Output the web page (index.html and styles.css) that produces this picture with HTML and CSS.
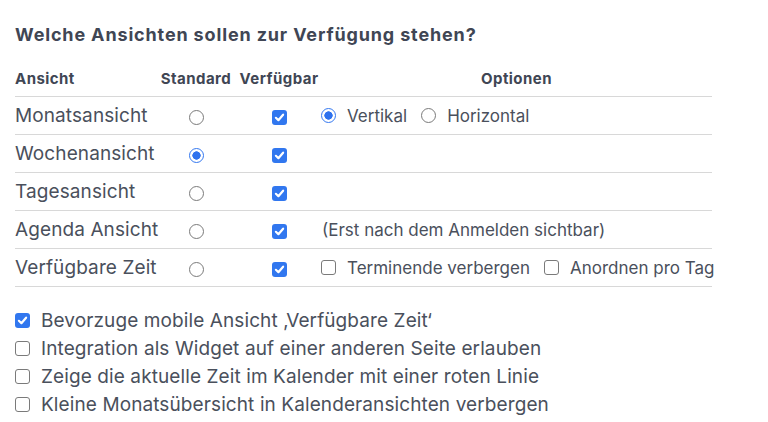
FILE: index.html
```html
<!DOCTYPE html>
<html lang="de">
<head>
<meta charset="utf-8">
<link rel="stylesheet" href="styles.css">
</head>
<body>
<div class="page">
  <h2 class="title">Welche Ansichten sollen zur Verfügung stehen?</h2>
  <table class="views">
    <thead>
      <tr>
        <th class="c-name">Ansicht</th>
        <th class="c-std">Standard</th>
        <th class="c-av">Verfügbar</th>
        <th class="c-opt">Optionen</th>
      </tr>
    </thead>
    <tbody>
      <tr>
        <td class="c-name">Monatsansicht</td>
        <td class="c-std"><span class="radio"></span></td>
        <td class="c-av"><span class="cb on"><svg viewBox="0 0 15 15"><path d="M3.9 7.8 L6.4 10.2 L11.1 4.7"/></svg></span></td>
        <td class="c-opt"><div class="opts"><label class="opt"><span class="radio on"></span>Vertikal</label><label class="opt"><span class="radio"></span>Horizontal</label></div></td>
      </tr>
      <tr>
        <td class="c-name">Wochenansicht</td>
        <td class="c-std"><span class="radio on"></span></td>
        <td class="c-av"><span class="cb on"><svg viewBox="0 0 15 15"><path d="M3.9 7.8 L6.4 10.2 L11.1 4.7"/></svg></span></td>
        <td class="c-opt"></td>
      </tr>
      <tr>
        <td class="c-name">Tagesansicht</td>
        <td class="c-std"><span class="radio"></span></td>
        <td class="c-av"><span class="cb on"><svg viewBox="0 0 15 15"><path d="M3.9 7.8 L6.4 10.2 L11.1 4.7"/></svg></span></td>
        <td class="c-opt"></td>
      </tr>
      <tr>
        <td class="c-name">Agenda Ansicht</td>
        <td class="c-std"><span class="radio"></span></td>
        <td class="c-av"><span class="cb on"><svg viewBox="0 0 15 15"><path d="M3.9 7.8 L6.4 10.2 L11.1 4.7"/></svg></span></td>
        <td class="c-opt"><span class="note">(Erst nach dem Anmelden sichtbar)</span></td>
      </tr>
      <tr>
        <td class="c-name">Verfügbare Zeit</td>
        <td class="c-std"><span class="radio"></span></td>
        <td class="c-av"><span class="cb on"><svg viewBox="0 0 15 15"><path d="M3.9 7.8 L6.4 10.2 L11.1 4.7"/></svg></span></td>
        <td class="c-opt"><div class="opts"><label class="opt"><span class="cb"></span>Terminende verbergen</label><label class="opt"><span class="cb"></span>Anordnen pro Tag</label></div></td>
      </tr>
    </tbody>
  </table>
  <ul class="prefs">
    <li><span class="cb on"><svg viewBox="0 0 15 15"><path d="M3.9 7.8 L6.4 10.2 L11.1 4.7"/></svg></span>Bevorzuge mobile Ansicht ‚Verfügbare Zeit‘</li>
    <li><span class="cb"></span>Integration als Widget auf einer anderen Seite erlauben</li>
    <li><span class="cb"></span>Zeige die aktuelle Zeit im Kalender mit einer roten Linie</li>
    <li><span class="cb"></span>Kleine Monatsübersicht in Kalenderansichten verbergen</li>
  </ul>
</div>
</body>
</html>
```

FILE: styles.css
```css
html, body {
  margin: 0;
  padding: 0;
  background: #ffffff;
}
body {
  font-family: Inter, "Liberation Sans", Arial, sans-serif;
  color: #4a505c;
}
.page {
  padding: 24px 0 0 15px;
}
.title {
  margin: 0;
  font-size: 18px;
  letter-spacing: 0.85px;
  font-weight: 700;
  line-height: 22px;
  color: #404654;
}
.views {
  margin-top: 22px;
  border-collapse: collapse;
  width: 697px;
  table-layout: fixed;
}
.views th {
  font-size: 15px;
  letter-spacing: 0.45px;
  font-weight: 700;
  color: #404654;
  height: 20px;
  padding: 0 0 8px 0;
  vertical-align: bottom;
  line-height: 18px;
  border-bottom: 1px solid #d8d8d8;
  white-space: nowrap;
}
.views td {
  height: 37px;
  padding: 0;
  border-bottom: 1px solid #d8d8d8;
  vertical-align: middle;
  white-space: nowrap;
}
.c-name { width: 140px; text-align: left; }
.c-std { width: 82px; text-align: center; }
.c-av { width: 84px; text-align: center; }
.c-opt { text-align: center; }
.views td.c-name { font-size: 19px; letter-spacing: 0.1px; }
.views td.c-opt { text-align: left; font-size: 17px; }

.opts {
  display: flex;
  align-items: center;
  gap: 14px;
}
.opt {
  display: flex;
  align-items: center;
  gap: 11px;
}
.note { display: inline-block; padding-left: 1px; }

.radio {
  display: inline-block;
  box-sizing: border-box;
  width: 15px;
  height: 15px;
  border: 1px solid #7a7a7a;
  border-radius: 50%;
  vertical-align: middle;
  background: #fff;
  flex: none;
}
.radio.on {
  border: 1.5px solid #3478f0;
  background: radial-gradient(circle, #2f72ee 0 3.9px, #ffffff 4.4px);
}
.cb {
  display: inline-flex;
  align-items: center;
  justify-content: center;
  box-sizing: border-box;
  width: 15px;
  height: 15px;
  border: 1px solid #7a7a7a;
  border-radius: 3px;
  vertical-align: middle;
  background: #fff;
  flex: none;
}
.cb.on {
  border: none;
  background: #3177ef;
}
.cb svg {
  width: 15px;
  height: 15px;
}
.cb svg path {
  fill: none;
  stroke: #ffffff;
  stroke-width: 2.2;
  stroke-linecap: round;
  stroke-linejoin: round;
}

.prefs {
  list-style: none;
  margin: 19px 0 0 0;
  padding: 0;
}
.prefs li {
  display: flex;
  align-items: center;
  gap: 11px;
  height: 28px;
  font-size: 19px;
  letter-spacing: 0.1px;
  white-space: nowrap;
}
```
